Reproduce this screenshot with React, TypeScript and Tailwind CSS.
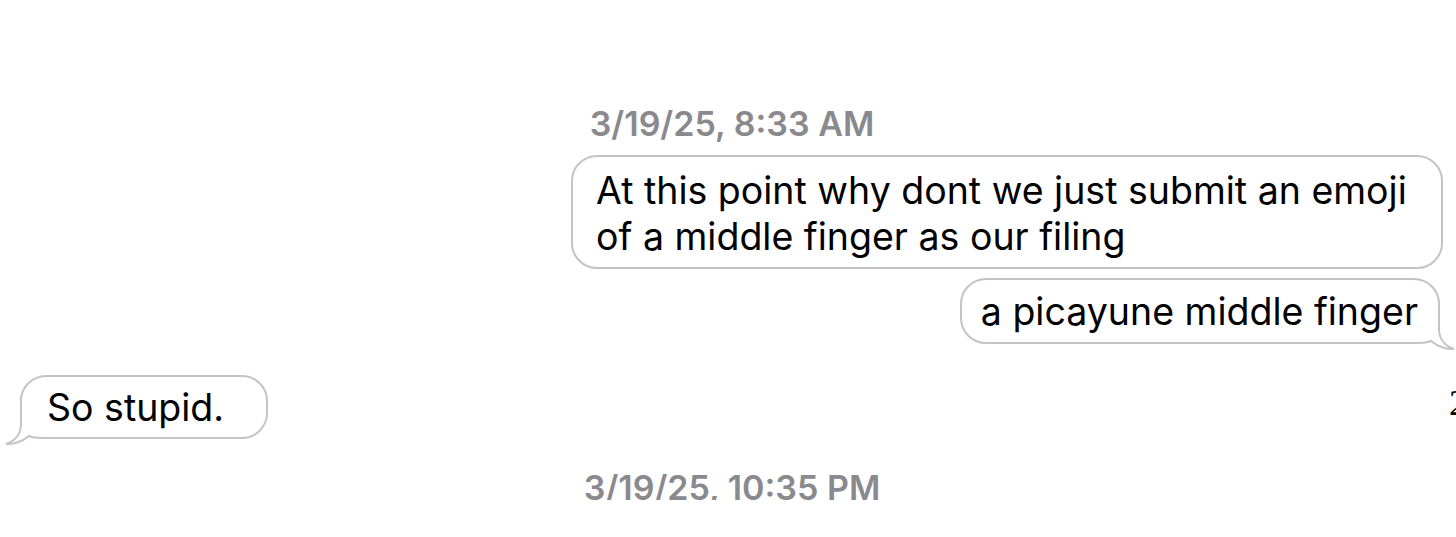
import React from "react";

function Tail({ side }: { side: "left" | "right" }) {
  const pos =
    side === "right"
      ? "right-[-20px] bottom-[-9px]"
      : "left-[-20px] bottom-[-9px] -scale-x-100";
  return (
    <svg
      className={`absolute ${pos} w-[54px] h-[50px] pointer-events-none`}
      viewBox="0 0 54 50"
      width={54}
      height={50}
    >
      <path
        d="M0,0 H37 V28 C37,38 42,44 51,48.5 C44,49.5 34,46 27,41.5 C23,43.5 18,44.5 0,44.5 Z"
        fill="#ffffff"
      />
      <path
        d="M35,0 V28 C35,38 41,45 50,48 C44,48.5 34,46 27,40 C23,42 18,42 0,42"
        fill="none"
        stroke="#c4c4c6"
        strokeWidth={2}
      />
    </svg>
  );
}

export default function App() {
  return (
    <div className="w-[1456px] h-[537px] overflow-hidden bg-white flex flex-col pt-[103px] font-['Inter','Noto_Sans',sans-serif] text-black">
      <div className="pl-[8px] text-center text-[34px] leading-[42px] font-semibold text-[#8a8a8e]">
        3/19/25, 8:33 AM
      </div>

      <div className="flex justify-end pr-[13px] mt-[10px]">
        <div className="w-[872px] rounded-[26px] border-2 border-[#c4c4c6] pl-[23px] pr-[10px] pt-[11px] pb-[7px] text-[37.5px] leading-[46px] whitespace-nowrap">
          At this point why dont we just submit an emoji
          <br />
          of a middle finger as our filing
        </div>
      </div>

      <div className="flex justify-end pr-[16px] mt-[9px]">
        <div className="relative rounded-[26px] border-2 border-[#c4c4c6] pl-[19px] pr-[20px] pt-[9px] pb-[7px] text-[37.5px] leading-[46px] whitespace-nowrap">
          <Tail side="right" />
          <span className="relative">a picayune middle finger</span>
        </div>
      </div>

      <div className="flex items-start mt-[31px] pl-[20px]">
        <div className="relative w-[248px] rounded-[26px] border-2 border-[#c4c4c6] pl-[25px] pt-[8px] pb-[6px] text-[37.5px] leading-[46px] whitespace-nowrap">
          <Tail side="left" />
          <span className="relative">So stupid.</span>
        </div>
        <span className="ml-auto mr-[-11px] mt-[10px] font-['Liberation_Serif',serif] text-[36px] leading-[36px] text-black">
          2
        </span>
      </div>

      <div className="mt-[28px] h-[33px] overflow-hidden pl-[8px] text-center text-[34px] leading-[42px] font-semibold text-[#8a8a8e]">
        3/19/25, 10:35 PM
      </div>
    </div>
  );
}
